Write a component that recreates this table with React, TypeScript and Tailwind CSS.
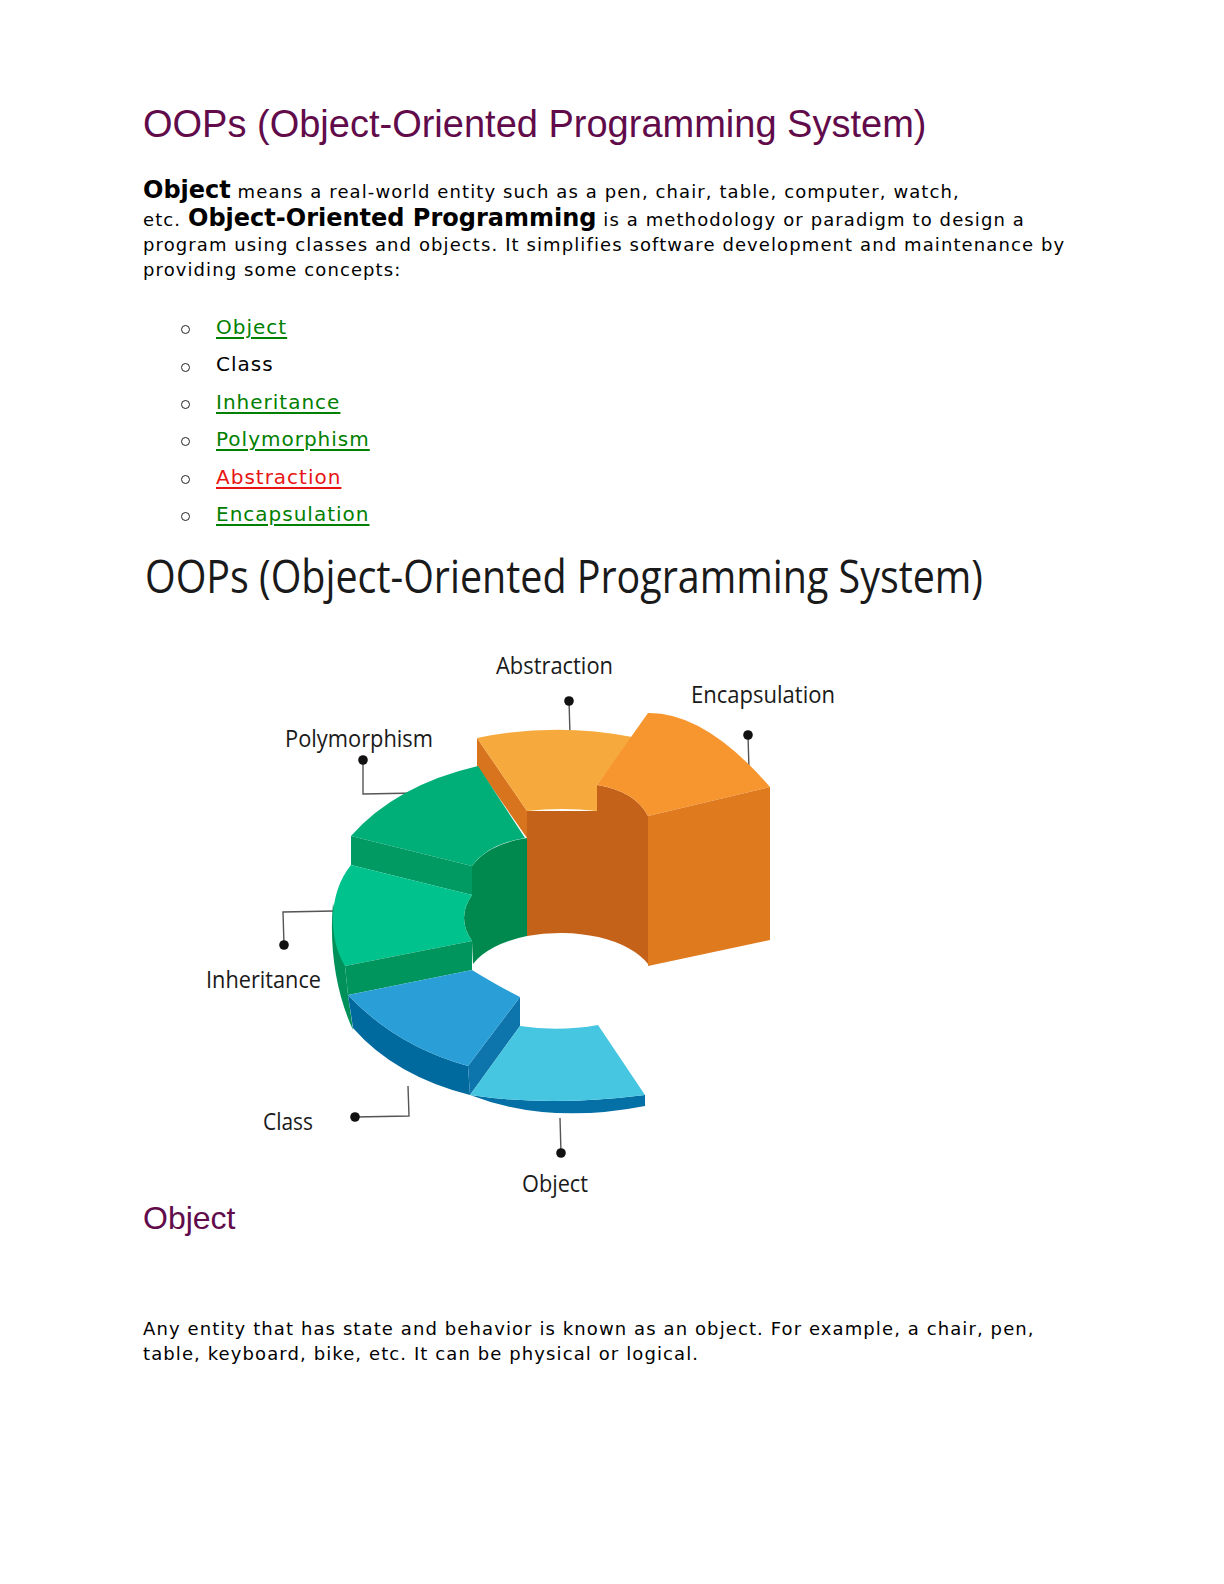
const concepts = [
  { label: 'Object', className: 'text-[#008000] underline underline-offset-[3px]' },
  { label: 'Class', className: 'text-black' },
  { label: 'Inheritance', className: 'text-[#008000] underline underline-offset-[3px]' },
  { label: 'Polymorphism', className: 'text-[#008000] underline underline-offset-[3px]' },
  { label: 'Abstraction', className: 'text-[#e81414] underline underline-offset-[3px]' },
  { label: 'Encapsulation', className: 'text-[#008000] underline underline-offset-[3px]' },
];

// label text + leader line for the diagram, page coordinates
const labels = [
  { text: 'Abstraction', x: 496, y: 676, w: 117 },
  { text: 'Encapsulation', x: 691, y: 705, w: 144 },
  { text: 'Polymorphism', x: 285, y: 749, w: 148 },
  { text: 'Inheritance', x: 206, y: 990, w: 115 },
  { text: 'Class', x: 263, y: 1132, w: 50 },
  { text: 'Object', x: 522, y: 1194, w: 66 },
];

const leaders = [
  { dot: [569, 703], path: 'M569,703 L570,736' },
  { dot: [748, 737], path: 'M748,737 L749,772' },
  { dot: [363, 762], path: 'M363,762 L363,796 L417,795' },
  { dot: [284, 947], path: 'M284,947 L283,914 L334,913' },
  { dot: [355, 1119], path: 'M355,1119 L409,1118 L408,1088' },
  { dot: [561, 1155], path: 'M561,1155 L560,1120' },
];

function OopsDiagram() {
  return (
    <svg className="mt-[4.7px] block" width={980} height={662} viewBox="143 540 980 662">
      <text
        x={145}
        y={595}
        fontFamily="'Open Sans', sans-serif"
        fontSize={46}
        textLength={838}
        lengthAdjust="spacingAndGlyphs"
        fill="#1a1a1a"
      >
        OOPs (Object-Oriented Programming System)
      </text>

      {/* leader lines */}
      {leaders.map((l, i) => (
        <g key={i}>
          <path d={l.path} fill="none" stroke="#555" strokeWidth={1.4} />
          <circle cx={l.dot[0]} cy={l.dot[1]} r={4.8} fill="#111" />
        </g>
      ))}

      {/* inner walls */}
      <path d="M527,813 L597,813 L597,787 Q635,793 648,818 L648,966 A95,50 0 0 0 527,938 Z" fill="#c4621a" />
      <path d="M472,868 Q488,846 527,840 L527,938 A95,50 0 0 0 473,966 L472,943 Q456,920 472,897 Z" fill="#00894f" />

      {/* abstraction */}
      <path d="M477,740 L527,813 L527,840 L477,768 Z" fill="#d8731e" />
      <path d="M477,740 Q555,724 632,739 L597,787 L597,813 Q562,809 527,813 Z" fill="#f6a93c" />

      {/* encapsulation */}
      <path d="M648,715 Q705,714 770,789 L648,818 Q635,793 597,787 Z" fill="#f7962f" />
      <path d="M648,818 L770,789 L770,942 L648,968 Z" fill="#e07a1f" />

      {/* green outer wall */}
      <path d="M333,905 C329,950 336,995 353,1032 L348,997 L345,968 Z" fill="#00915a" />

      {/* polymorphism */}
      <path d="M351,838 Q396,787 478,768 L525,840 Q488,846 472,868 Z" fill="#00ae77" />
      <path d="M351,838 L472,868 L472,897 L351,867 Z" fill="#009a62" />

      {/* inheritance */}
      <path d="M351,867 L472,897 Q456,920 472,943 L345,968 C328,940 328,895 351,867 Z" fill="#00c28c" />
      <path d="M345,968 L472,943 L472,972 L348,997 Z" fill="#00955c" />

      {/* class */}
      <path d="M348,997 Q396,1048 468,1068 L470,1097 Q395,1078 353,1030 Z" fill="#006a9f" />
      <path d="M520,999 L520,1028 L470,1097 L468,1068 Z" fill="#0d75ab" />
      <path d="M348,997 L472,972 Q498,988 520,999 L468,1068 Q396,1048 348,997 Z" fill="#2a9fd7" />

      {/* object */}
      <path d="M470,1097 Q549,1109 645,1097 L645,1108 Q548,1127 470,1097 Z" fill="#0570a5" />
      <path d="M520,1028 Q559,1034 598,1027 L645,1097 Q549,1109 470,1097 Z" fill="#46c6e1" />

      {labels.map((l) => (
        <text
          key={l.text}
          x={l.x}
          y={l.y}
          fontFamily="'Open Sans', sans-serif"
          fontSize={24}
          textLength={l.w}
          lengthAdjust="spacingAndGlyphs"
          fill="#1a1a1a"
        >
          {l.text}
        </text>
      ))}
    </svg>
  );
}

export default function App() {
  return (
    <div className="min-h-[1584px] bg-white">
      <div className="ml-[143px] w-[935px] pt-[105px] font-['DejaVu_Sans',Verdana,sans-serif] text-black">
        <h1 className="font-['Liberation_Sans',Arial,sans-serif] text-[38px] leading-[38px] font-normal text-[#610B4B]">
          OOPs (Object-Oriented Programming System)
        </h1>

        <p className="mt-[34px] text-[18px] leading-[25px] tracking-[1.1px]">
          <b className="text-[24px] leading-[27.5px] tracking-normal">Object</b> means a real-world entity such as a pen, chair, table, computer, watch,
          <br />
          etc. <b className="text-[24px] leading-[27.5px] tracking-normal">Object-Oriented Programming</b> is a methodology or paradigm to design a
          program using classes and objects. It simplifies software development and maintenance by providing some concepts:
        </p>

        <ul className="mt-[27px] pl-[38px] text-[20px] leading-[37.4px] tracking-[1px]">
          {concepts.map((c) => (
            <li key={c.label} className="flex items-center">
              <span className="h-[9px] w-[9px] shrink-0 translate-y-[2px] rounded-full border border-[#222]" />
              <span className={'ml-[26px] ' + c.className}>{c.label}</span>
            </li>
          ))}
        </ul>

        <OopsDiagram />

        <h2 className="mt-[2.3px] font-['Liberation_Sans',Arial,sans-serif] text-[32px] leading-[32px] font-normal text-[#610B4B]">
          Object
        </h2>

        <p className="mt-[81.7px] text-[18px] leading-[25px] tracking-[1.1px]">
          Any entity that has state and behavior is known as an object. For example, a chair, pen,
          <br />
          table, keyboard, bike, etc. It can be physical or logical.
        </p>
      </div>
    </div>
  );
}
